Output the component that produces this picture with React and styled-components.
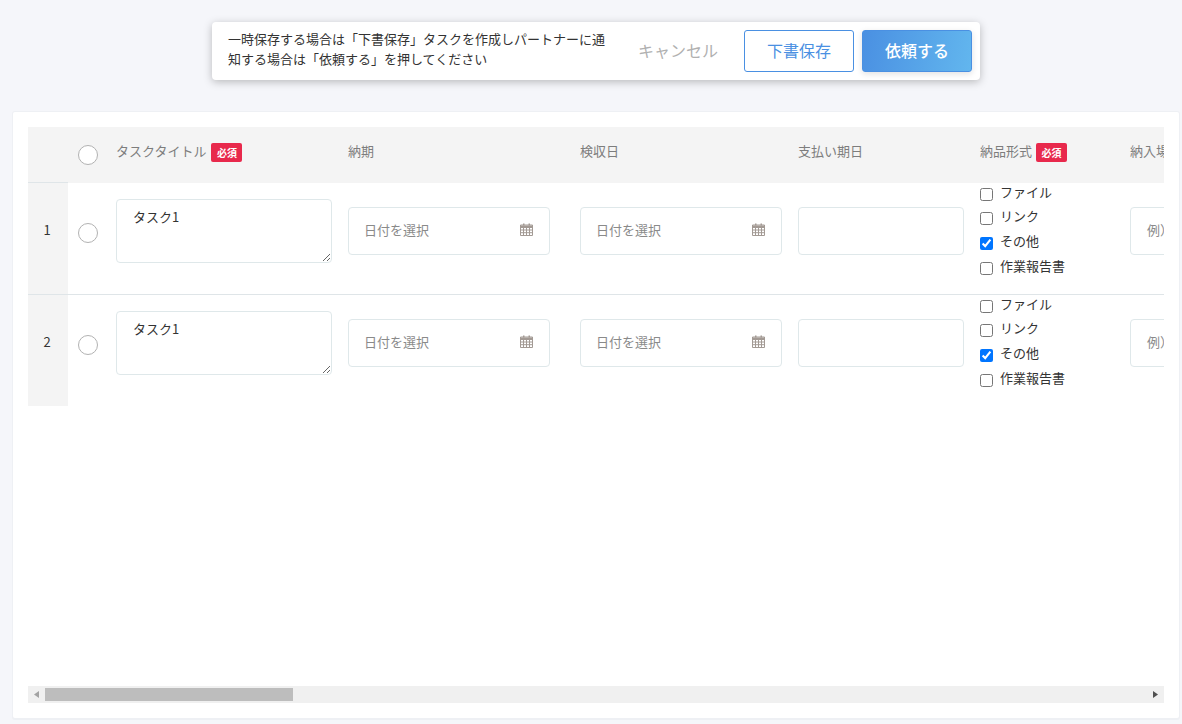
import React from 'react';
import styled, { createGlobalStyle } from 'styled-components';

const CalendarIcon = () => (
  <CalendarSvg viewBox="0 0 13 13">
    <path d="M3 0.5h1.5v2H3zM8.5 0.5H10v2H8.5z" fill="#a39a94" />
    <path
      d="M0.5 2h12v10.5H0.5zM0.5 4.5h12M0.5 7h12M0.5 9.7h12M3.5 4.5v8M6.5 4.5v8M9.5 4.5v8"
      fill="none"
      stroke="#a39a94"
      strokeWidth="1"
    />
    <rect x="1" y="2.5" width="11" height="2" fill="#a39a94" />
  </CalendarSvg>
);

const DateField = () => (
  <DateBox>
    <span>日付を選択</span>
    <CalendarIcon />
  </DateBox>
);

const formats = [
  { name: 'ファイル', checked: false },
  { name: 'リンク', checked: false },
  { name: 'その他', checked: true },
  { name: '作業報告書', checked: false },
];

const TaskRow = ({ num, last }) => (
  <Row $last={last}>
    <NumCell>{num}</NumCell>
    <RowRadioCell>
      <Circle />
    </RowRadioCell>
    <TitleCell>
      <TitleInput defaultValue="タスク1" />
    </TitleCell>
    <Cell>
      <DateField />
    </Cell>
    <Cell>
      <DateField />
    </Cell>
    <Cell>
      <PayBox />
    </Cell>
    <CheckCell>
      {formats.map((f) => (
        <CheckLine key={f.name}>
          <input type="checkbox" defaultChecked={f.checked} />
          <span>{f.name}</span>
        </CheckLine>
      ))}
    </CheckCell>
    <Cell>
      <PlaceBox>例）本社</PlaceBox>
    </Cell>
  </Row>
);

const App = () => (
  <>
    <GlobalStyle />
    <Page>
      <ActionBarWrap>
        <ActionBar>
          <Message>
            一時保存する場合は「下書保存」タスクを作成しパートナーに通知する場合は「依頼する」を押してください
          </Message>
          <CancelButton>キャンセル</CancelButton>
          <DraftButton>下書保存</DraftButton>
          <RequestButton>依頼する</RequestButton>
        </ActionBar>
      </ActionBarWrap>
      <Panel>
        <TableClip>
          <Table>
            <HeadRow>
              <HeadNum />
              <HeadRadioCell>
                <Circle />
              </HeadRadioCell>
              <HeadCell>
                タスクタイトル<Required>必須</Required>
              </HeadCell>
              <HeadCell>納期</HeadCell>
              <HeadCell>検収日</HeadCell>
              <HeadCell>支払い期日</HeadCell>
              <HeadCell>
                納品形式<Required $tight>必須</Required>
              </HeadCell>
              <HeadCell>納入場所</HeadCell>
            </HeadRow>
            <TaskRow num={1} />
            <TaskRow num={2} last />
          </Table>
        </TableClip>
        <ScrollBar>
          <ScrollButton>
            <svg width="5" height="7" viewBox="0 0 5 7">
              <path d="M5 0v7L0 3.5z" fill="#a3a3a3" />
            </svg>
          </ScrollButton>
          <ScrollThumb />
          <ScrollTrack />
          <ScrollButton>
            <svg width="5" height="7" viewBox="0 0 5 7">
              <path d="M0 0v7l5-3.5z" fill="#505050" />
            </svg>
          </ScrollButton>
        </ScrollBar>
      </Panel>
    </Page>
  </>
);

export default App;

const GlobalStyle = createGlobalStyle`
  html, body {
    margin: 0;
    height: 100%;
    overflow: hidden;
    background: #f5f6fa;
  }
  body {
    font-family: "Noto Sans CJK JP", "Noto Sans", sans-serif;
    font-size: 13px;
    color: #333;
  }
`;

const Page = styled.div`
  box-sizing: border-box;
  height: 724px;
  padding: 22px 3px 6px 13px;
  display: flex;
  flex-direction: column;
`;

const ActionBarWrap = styled.div`
  display: flex;
  justify-content: center;
  margin-bottom: 32px;
`;

const ActionBar = styled.div`
  box-sizing: border-box;
  width: 768px;
  height: 58px;
  padding: 0 8px 0 16px;
  display: flex;
  align-items: center;
  background: #fff;
  border-radius: 4px;
  box-shadow: 0 2px 8px rgba(0, 0, 0, 0.25);
`;

const Message = styled.p`
  width: 384px;
  margin: 0;
  padding-bottom: 4px;
  font-size: 13px;
  line-height: 20px;
  color: #333;
`;

const CancelButton = styled.button`
  width: 80px;
  margin: 0 26px;
  padding: 0 0 3px;
  border: none;
  background: none;
  font: inherit;
  font-size: 16px;
  white-space: nowrap;
  color: #b0b0b0;
`;

const DraftButton = styled.button`
  box-sizing: border-box;
  width: 110px;
  height: 42px;
  margin-right: 8px;
  padding: 0 0 3px;
  border: 1px solid #4a90e2;
  border-radius: 3px;
  background: #fff;
  font: inherit;
  font-size: 16px;
  color: #4a90e2;
`;

const RequestButton = styled.button`
  box-sizing: border-box;
  width: 110px;
  height: 42px;
  padding: 0 0 3px;
  border: 1px solid #4a90e2;
  border-radius: 3px;
  background: linear-gradient(100deg, #4a90e2, #62b6ee);
  box-shadow: 0 2px 6px rgba(0, 0, 0, 0.12);
  font: inherit;
  font-size: 16px;
  font-weight: 500;
  color: #fff;
`;

const Panel = styled.section`
  box-sizing: border-box;
  flex: 1;
  min-height: 0;
  padding: 15px;
  display: flex;
  flex-direction: column;
  background: #fff;
  border-radius: 2px;
  box-shadow: 0 0 0 1px #eef0f4, 0 1px 0 1px #eef0f4;
`;

const TableClip = styled.div`
  flex: 1;
  min-height: 0;
  overflow: hidden;
`;

const Table = styled.div`
  width: 5048px;
`;

const columns = '40px 48px 232px 232px 218px 182px 150px 1fr';

const HeadRow = styled.div`
  display: grid;
  grid-template-columns: ${columns};
  height: 56px;
  background: #f4f4f4;
`;

const HeadNum = styled.div`
  border-bottom: 1px solid #dfe5e8;
`;

const HeadCell = styled.div`
  display: flex;
  align-items: center;
  height: 46px;
  font-size: 13px;
  color: #7d7d7d;
`;

const Required = styled.span`
  box-sizing: border-box;
  width: 31px;
  height: 19px;
  margin: 4px 0 0 ${(p) => (p.$tight ? '4px' : '5px')};
  display: inline-flex;
  align-items: center;
  justify-content: center;
  border-radius: 2px;
  background: #e8294c;
  color: #fff;
  font-size: 10px;
  font-weight: 700;
`;

const Row = styled.div`
  box-sizing: border-box;
  display: grid;
  grid-template-columns: ${columns};
  height: ${(p) => (p.$last ? '111px' : '112px')};
  border-bottom: ${(p) => (p.$last ? 'none' : '1px solid #dfe5e8')};
`;

const NumCell = styled.div`
  padding: 0 2px 18px 0;
  display: flex;
  align-items: center;
  justify-content: center;
  background: #f4f4f4;
  color: #333;
`;

const HeadRadioCell = styled.div`
  display: flex;
  align-items: center;
  padding-left: 10px;
`;

const RowRadioCell = styled(HeadRadioCell)`
  padding-bottom: 12px;
`;

const Circle = styled.span`
  box-sizing: border-box;
  width: 20px;
  height: 20px;
  border: 1px solid #b2b2b2;
  border-radius: 50%;
  background: #fff;
`;

const Cell = styled.div`
  padding-top: 24px;
`;

const TitleCell = styled.div`
  padding-top: 16px;
`;

const TitleInput = styled.textarea`
  box-sizing: border-box;
  display: block;
  width: 216px;
  height: 64px;
  margin: 0;
  padding: 7px 16px;
  border: 1px solid #dfe8ea;
  border-radius: 4px;
  outline: none;
  font: inherit;
  font-size: 13px;
  line-height: 20px;
  color: #333;
`;

const DateBox = styled.div`
  box-sizing: border-box;
  width: 202px;
  height: 48px;
  padding: 0 16px 4px 15px;
  display: flex;
  align-items: center;
  justify-content: space-between;
  border: 1px solid #dfe8ea;
  border-radius: 4px;
  color: #8a8a8a;
  font-size: 13px;
`;

const CalendarSvg = styled.svg`
  width: 13px;
  height: 13px;
`;

const PayBox = styled.div`
  box-sizing: border-box;
  width: 166px;
  height: 48px;
  border: 1px solid #dfe8ea;
  border-radius: 4px;
`;

const CheckCell = styled.div`
  margin-top: -4px;
  display: flex;
  flex-direction: column;
`;

const CheckLine = styled.label`
  display: flex;
  align-items: center;
  height: 24.6px;
  font-size: 13px;
  color: #333;

  input {
    width: 13px;
    height: 13px;
    margin: 6px 7px 0 0;
  }
`;

const PlaceBox = styled.div`
  box-sizing: border-box;
  width: 202px;
  height: 48px;
  padding: 0 16px 4px 16px;
  display: flex;
  align-items: center;
  border: 1px solid #dfe8ea;
  border-radius: 4px;
  color: #8a8a8a;
  font-size: 13px;
`;

const ScrollBar = styled.div`
  flex: none;
  height: 17px;
  display: flex;
  background: #f0f0f0;
`;

const ScrollButton = styled.div`
  width: 17px;
  display: flex;
  align-items: center;
  justify-content: center;
`;

const ScrollThumb = styled.div`
  width: 248px;
  margin: 2px 0;
  background: #bdbdbd;
`;

const ScrollTrack = styled.div`
  flex: 1;
`;
